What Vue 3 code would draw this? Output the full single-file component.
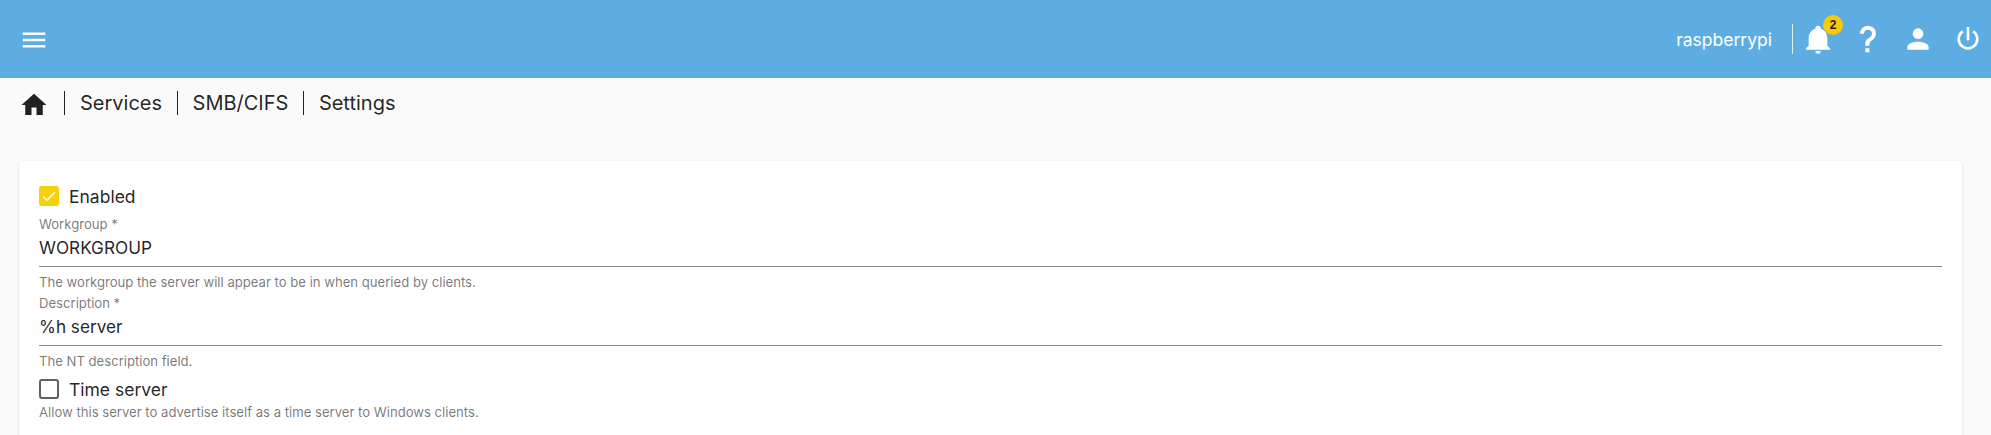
<script setup>
const crumbs = ['Services', 'SMB/CIFS', 'Settings']
</script>

<template>
  <div class="page">
    <header class="topbar">
      <button class="icon-btn menu-btn">
        <svg viewBox="0 0 24 24" width="30" height="30"><path d="M3 6h18v2H3V6m0 5h18v2H3v-2m0 5h18v2H3v-2z" /></svg>
      </button>
      <div class="spacer"></div>
      <span class="hostname">raspberrypi</span>
      <span class="bar-divider"></span>
      <button class="icon-btn bell-btn">
        <svg viewBox="0 0 24 24" width="32" height="32"><path d="M21 19v1H3v-1l2-2v-6c0-3.100 2-5.800 5-6.700V4a2 2 0 0 1 4 0v.3c3 .9 5 3.600 5 6.700v6l2 2m-7 2a2 2 0 0 1-4 0" /></svg>
        <span class="badge">2</span>
      </button>
      <button class="icon-btn help-btn">
        <svg viewBox="0 0 24 24" width="32" height="32"><path d="M10 19h3v3h-3v-3m2-17c5.350.220 7.680 5.620 4.500 9.670-.830 1-2.170 1.660-2.830 2.500C13 15 13 16 13 17h-3c0-1.670 0-3.080.670-4.080.660-1 2-1.590 2.830-2.250C15.920 8.430 15.320 5.260 12 5a3 3 0 0 0-3 3H6a6 6 0 0 1 6-6z" /></svg>
      </button>
      <button class="icon-btn user-btn">
        <svg viewBox="0 0 24 24" width="32" height="32"><path d="M12 4a4 4 0 0 1 4 4 4 4 0 0 1-4 4 4 4 0 0 1-4-4 4 4 0 0 1 4-4m0 10c4.420 0 8 1.790 8 4v2H4v-2c0-2.210 3.580-4 8-4z" /></svg>
      </button>
      <button class="icon-btn power-btn">
        <svg viewBox="0 0 24 24" width="32" height="32"><path d="M16.560 5.440l-1.450 1.450A5.969 5.969 0 0 1 18 12a6 6 0 0 1-6 6 6 6 0 0 1-6-6c0-2.170 1.160-4.060 2.880-5.120L7.440 5.440A7.961 7.961 0 0 0 4 12a8 8 0 0 0 8 8 8 8 0 0 0 8-8c0-2.720-1.360-5.120-3.440-6.560M13 3h-2v10h2" /></svg>
      </button>
    </header>

    <nav class="crumbs">
      <svg class="home" viewBox="0 0 24 24" width="30" height="30"><path d="M10 20v-6h4v6h5v-8h3L12 3 2 12h3v8h5z" /></svg>
      <template v-for="c in crumbs" :key="c">
        <span class="crumb-sep"></span>
        <span class="crumb">{{ c }}</span>
      </template>
    </nav>

    <main class="card">
      <label class="check-row first">
        <span class="box checked">
          <svg viewBox="0 0 24 24" width="20" height="20"><path d="M5 12.500l4.500 4.500L19 7.500" fill="none" stroke="#fff" stroke-width="1.800" /></svg>
        </span>
        <span>Enabled</span>
      </label>

      <div class="field">
        <div class="field-label">Workgroup *</div>
        <div class="field-value">WORKGROUP</div>
        <div class="field-hint">The workgroup the server will appear to be in when queried by clients.</div>
      </div>

      <div class="field">
        <div class="field-label">Description *</div>
        <div class="field-value">%h server</div>
        <div class="field-hint">The NT description field.</div>
      </div>

      <label class="check-row">
        <span class="box"></span>
        <span>Time server</span>
      </label>
      <div class="check-hint">Allow this server to advertise itself as a time server to Windows clients.</div>
    </main>
  </div>
</template>

<style>
html, body {
  margin: 0;
  height: 100%;
  overflow: hidden;
  background: #fafafa;
}
</style>

<style scoped>
.page {
  font-family: Inter, "Liberation Sans", sans-serif;
  color: rgba(0, 0, 0, 0.87);
  height: 435px;
  overflow: hidden;
}

.topbar {
  display: flex;
  align-items: center;
  height: 78px;
  background: #5dade2;
  color: #fff;
  padding: 0 0 0 19px;
}

.spacer {
  flex: 1;
}

.icon-btn {
  background: none;
  border: 0;
  padding: 0;
  display: flex;
  align-items: center;
  justify-content: center;
  position: relative;
  color: #fff;
  width: 50px;
  height: 40px;
}

.icon-btn svg {
  fill: currentColor;
}

.menu-btn {
  width: 30px;
  margin-top: 2px;
}

.power-btn {
  width: 46px;
  margin-left: 2px;
}

.hostname {
  font-size: 17.500px;
  margin-right: 20px;
}

.bar-divider {
  width: 1px;
  height: 30px;
  background: rgba(255, 255, 255, 0.8);
}

.badge {
  position: absolute;
  top: -4px;
  left: 30px;
  width: 20px;
  height: 20px;
  border-radius: 50%;
  background: #f7c90d;
  color: rgba(0, 0, 0, 0.87);
  font-size: 12px;
  font-weight: 600;
  line-height: 20px;
  text-align: center;
}

.crumbs {
  display: flex;
  align-items: center;
  height: 50px;
  padding-left: 19px;
  font-size: 20px;
}

.home {
  fill: #212121;
  margin: 4px 15px 0 0;
}

.crumb-sep {
  width: 1px;
  height: 24px;
  background: #212121;
}

.crumb {
  margin: 0 14.500px 0 15px;
}

.card {
  margin: 33px 29px 0 19px;
  padding: 25px 20px 60px;
  background: #fff;
  border-radius: 4px;
  box-shadow: 0 2px 1px -1px rgba(0, 0, 0, 0.2), 0 1px 1px 0 rgba(0, 0, 0, 0.14), 0 1px 3px 0 rgba(0, 0, 0, 0.12);
}

.check-row {
  display: flex;
  align-items: center;
  gap: 10px;
  height: 20px;
  font-size: 17.500px;
  margin-top: 10px;
}

.check-row.first {
  margin-top: 0;
  margin-bottom: 6px;
}

.box {
  box-sizing: border-box;
  width: 20px;
  height: 20px;
  border: 2px solid #616161;
  border-radius: 3px;
  display: flex;
}

.box.checked {
  border: 0;
  background: #f7d20c;
}

.field-label {
  font-size: 13.120px;
  line-height: 16px;
  color: rgba(0, 0, 0, 0.54);
  padding-top: 4px;
}

.field-value {
  box-sizing: border-box;
  font-size: 17.200px;
  line-height: 32px;
  height: 35px;
  border-bottom: 1px solid #8a8a8a;
}

.field-hint {
  font-size: 13.120px;
  line-height: 16px;
  height: 23.500px;
  padding-top: 7px;
  box-sizing: border-box;
  color: rgba(0, 0, 0, 0.54);
}

.check-hint {
  font-size: 13.120px;
  line-height: 16px;
  margin-top: 5px;
  color: rgba(0, 0, 0, 0.54);
}
</style>
